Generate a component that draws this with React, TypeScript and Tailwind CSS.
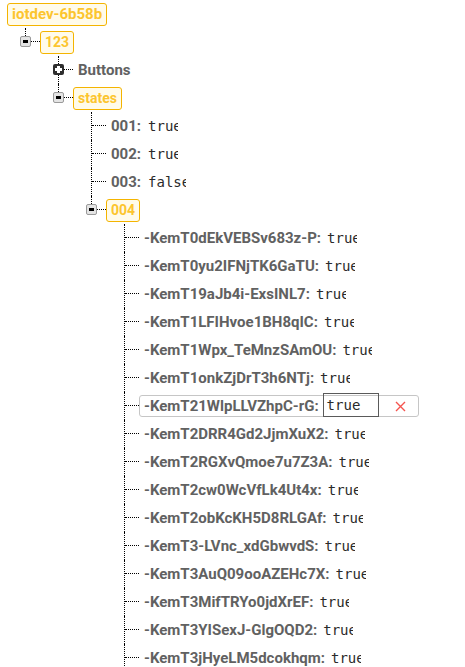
import React from "react";

type TNode = {
  label: string;
  highlight?: boolean;
  value?: string;
  vw?: string;
  vgap?: string;
  toggle?: "minus" | "plus";
  children?: TNode[];
  editing?: boolean;
  big?: boolean;
};

const keys = [
  "-KemT0dEkVEBSv683z-P",
  "-KemT0yu2IFNjTK6GaTU",
  "-KemT19aJb4i-ExsINL7",
  "-KemT1LFIHvoe1BH8qIC",
  "-KemT1Wpx_TeMnzSAmOU",
  "-KemT1onkZjDrT3h6NTj",
  "-KemT21WlpLLVZhpC-rG",
  "-KemT2DRR4Gd2JjmXuX2",
  "-KemT2RGXvQmoe7u7Z3A",
  "-KemT2cw0WcVfLk4Ut4x",
  "-KemT2obKcKH5D8RLGAf",
  "-KemT3-LVnc_xdGbwvdS",
  "-KemT3AuQ09ooAZEHc7X",
  "-KemT3MifTRYo0jdXrEF",
  "-KemT3YISexJ-GlgOQD2",
  "-KemT3jHyeLM5dcokhqm",
  "-KemT3vQpLx8aNd2RkWz",
];

const tree: TNode = {
  label: "iotdev-6b58b",
  highlight: true,
  big: true,
  children: [
    {
      label: "123",
      highlight: true,
      toggle: "minus",
      children: [
        { label: "Buttons", toggle: "plus" },
        {
          label: "states",
          highlight: true,
          toggle: "minus",
          children: [
            { label: "001", value: "true", vw: "w-[30px]", vgap: "ml-[7px]" },
            { label: "002", value: "true", vw: "w-[30px]", vgap: "ml-[7px]" },
            { label: "003", value: "false", vw: "w-[38px]", vgap: "ml-[7px]" },
            {
              label: "004",
              highlight: true,
              toggle: "minus",
              children: keys.map((k) => ({
                label: k,
                value: "true",
                vw: "w-[30px]",
                vgap: "ml-[6px]",
                editing: k === "-KemT21WlpLLVZhpC-rG",
              })),
            },
          ],
        },
      ],
    },
  ],
};

function Toggle({ kind }: { kind: "minus" | "plus" }) {
  if (kind === "plus") {
    return (
      <div className="absolute left-[-6px] top-[8px] w-[11px] h-[11px] rounded-[2px] bg-[#2e2e2e] flex items-center justify-center">
        <svg width="7" height="7" viewBox="0 0 7 7" shapeRendering="crispEdges">
          <rect x="0" y="2" width="7" height="3" fill="#fff" />
          <rect x="2" y="0" width="3" height="7" fill="#fff" />
        </svg>
      </div>
    );
  }
  return (
    <div className="absolute left-[-6px] top-[8px] w-[11px] h-[11px] rounded-[2px] border border-[#9a9a9a] bg-[#e4e4e4] flex items-center justify-center">
      <div className="w-[5px] h-[3px] bg-black" />
    </div>
  );
}

const keyFont = "font-['Roboto',sans-serif] font-bold text-[15px] text-[#616161] whitespace-nowrap";
const mono = "font-['DejaVu_Sans_Mono',monospace] text-[14px] text-[#2a2a2a] whitespace-nowrap";

function Label({ node }: { node: TNode }) {
  if (node.editing) {
    return (
      <div className="h-[22px] flex items-center border border-[#c6c6c6] rounded-[3px] pl-1 bg-white">
        <span className={keyFont}>{node.label}:</span>
        <div className={"ml-[4px] mb-[2px] h-[24px] w-[56px] border border-[#5a5a5a] flex items-center pl-[3px] " + mono}>
          {node.value}
        </div>
        <svg className="ml-[16px] mr-[12px]" width="11" height="11" viewBox="0 0 11 11">
          <path d="M1 1 L10 10 M10 1 L1 10" stroke="#f5544f" strokeWidth="1.4" fill="none" />
        </svg>
      </div>
    );
  }
  if (node.highlight) {
    return (
      <div
        className={
          "h-[23px] px-1 flex items-center border border-[#f4b400] bg-[#fffbea] rounded-[3px] font-['Roboto',sans-serif] font-bold text-[#fcc52e] whitespace-nowrap " +
          (node.big ? "text-[15px]" : "text-[14px]")
        }
      >
        {node.label}
      </div>
    );
  }
  return (
    <div className="h-[23px] px-1 flex items-center border border-transparent">
      <span className={keyFont}>
        {node.label}
        {node.value !== undefined ? ":" : ""}
      </span>
      {node.value !== undefined && (
        <span className={"overflow-hidden " + (node.vgap || "") + " " + (node.vw || "") + " " + mono}>
          {node.value}
        </span>
      )}
    </div>
  );
}

function NodeView({ node, isLast }: { node: TNode; isLast: boolean }) {
  return (
    <div className={"border-l border-dotted " + (isLast ? "border-transparent" : "border-black")}>
      <div className="flex items-start h-7">
        <div className="relative w-[14px] h-7 shrink-0">
          <div className={"h-[14px] border-b border-dotted border-black " + (isLast ? "-ml-px border-l" : "")} />
          {node.toggle && <Toggle kind={node.toggle} />}
        </div>
        <div className="h-7 flex items-center">
          <Label node={node} />
        </div>
      </div>
      {node.children && node.toggle === "minus" && (
        <div className="ml-[32px]">
          {node.children.map((c, i) => (
            <NodeView key={c.label} node={c} isLast={i === node.children!.length - 1} />
          ))}
        </div>
      )}
    </div>
  );
}

export default function App() {
  return (
    <div className="w-[465px] h-[667px] overflow-hidden bg-white pl-[7px]">
      <div className="h-7 flex items-center">
        <Label node={tree} />
      </div>
      <div className="ml-[18px]">
        {tree.children!.map((c, i) => (
          <NodeView key={c.label} node={c} isLast={i === tree.children!.length - 1} />
        ))}
      </div>
    </div>
  );
}
